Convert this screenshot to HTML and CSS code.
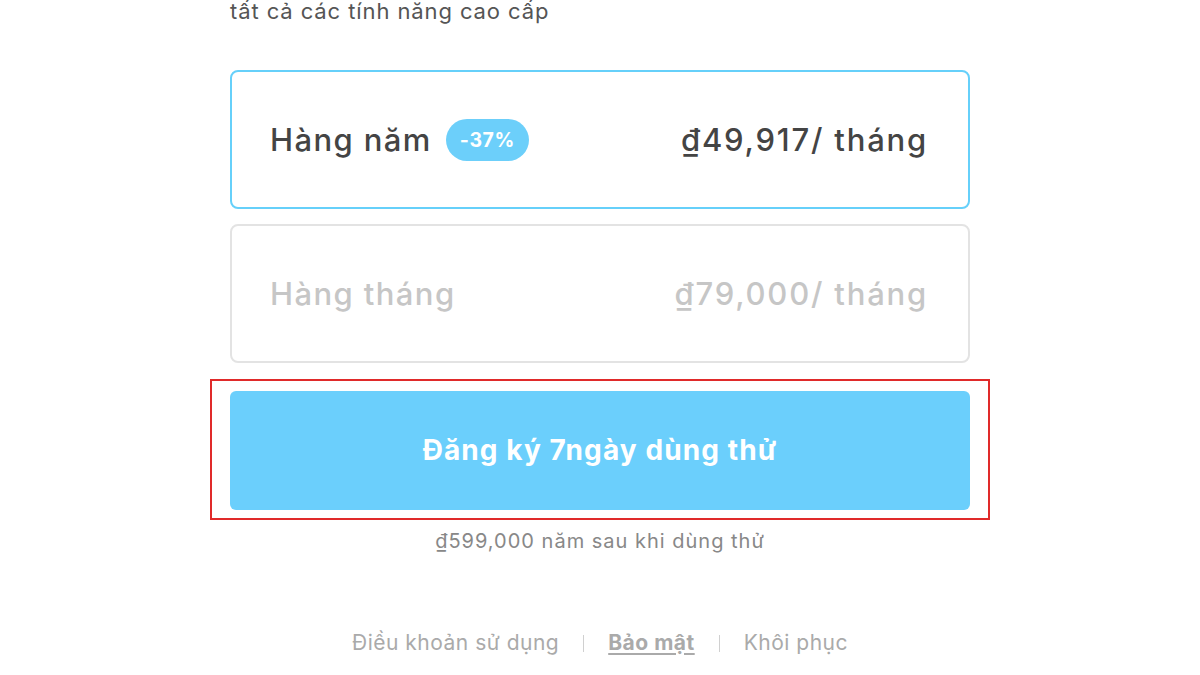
FILE: index.html
```html
<!DOCTYPE html>
<html lang="vi">
<head>
<meta charset="utf-8">
<link rel="stylesheet" href="styles.css">
</head>
<body>
<div class="page">
  <p class="intro">tất cả các tính năng cao cấp</p>
  <div class="plan plan-active">
    <div class="plan-left">
      <span class="plan-name">Hàng năm</span>
      <span class="badge">-37%</span>
    </div>
    <span class="plan-price">₫49,917/ tháng</span>
  </div>
  <div class="plan plan-inactive">
    <div class="plan-left">
      <span class="plan-name">Hàng tháng</span>
    </div>
    <span class="plan-price">₫79,000/ tháng</span>
  </div>
  <div class="highlight">
    <button class="cta">Đăng ký 7ngày dùng thử</button>
  </div>
  <p class="note">₫599,000 năm sau khi dùng thử</p>
  <nav class="footer">
    <a class="link">Điều khoản sử dụng</a>
    <span class="sep"></span>
    <a class="link link-bold">Bảo mật</a>
    <span class="sep"></span>
    <a class="link">Khôi phục</a>
  </nav>
</div>
</body>
</html>
```
FILE: styles.css
```css
html, body {
  margin: 0;
  padding: 0;
  background: #ffffff;
  overflow: hidden;
}
body {
  font-family: Inter, "Noto Sans", "Liberation Sans", sans-serif;
  width: 1200px;
  height: 675px;
}
.page {
  width: 740px;
  margin: 0 auto;
  display: flex;
  flex-direction: column;
}
.intro {
  margin: -6px 0 0 0;
  font-size: 22px;
  line-height: 34px;
  letter-spacing: 0.9px;
  color: #555555;
  height: 34px;
}
.plan {
  box-sizing: border-box;
  height: 139px;
  border-radius: 8px;
  display: flex;
  align-items: center;
  justify-content: space-between;
  padding: 0 41px 0 38px;
}
.plan-active {
  margin-top: 42px;
  border: 2px solid #66d0fa;
  color: #444444;
}
.plan-inactive {
  margin-top: 15px;
  border: 2px solid #e3e3e3;
  color: #c6c6c6;
}
.plan-left {
  display: flex;
  align-items: center;
  gap: 14px;
}
.plan-name, .plan-price {
  font-size: 31px;
  font-weight: 500;
  letter-spacing: 1.4px;
}
.plan-price {
  letter-spacing: 1.8px;
  margin-right: -1px;
}
.badge {
  background: #6ccffa;
  color: #ffffff;
  font-size: 19.5px;
  font-weight: 700;
  letter-spacing: 0.6px;
  height: 42px;
  line-height: 42px;
  padding: 0 14px;
  border-radius: 21px;
}
.highlight {
  margin: 16px -20px 0;
  border: 2px solid #e02a2a;
  padding: 10px 18px 8px;
}
.cta {
  display: block;
  width: 100%;
  height: 119px;
  border: none;
  border-radius: 6px;
  background: #6bcffc;
  color: #ffffff;
  font-family: Inter, "Noto Sans", "Liberation Sans", sans-serif;
  font-size: 28px;
  font-weight: 700;
  letter-spacing: 1.1px;
  padding: 0 0 2px;
}
.note {
  margin: 9px 0 0;
  text-align: center;
  font-size: 20px;
  line-height: 24px;
  letter-spacing: 1px;
  color: #888888;
}
.footer {
  margin-top: 77px;
  display: flex;
  justify-content: center;
  align-items: center;
  gap: 24px;
}
.link {
  font-size: 21px;
  line-height: 26px;
  letter-spacing: 0.5px;
  color: #aaaaaa;
}
.link-bold {
  font-weight: 700;
  text-decoration: underline;
  text-underline-offset: 3px;
}
.sep {
  width: 1px;
  height: 17px;
  background: #d0d0d0;
}
```
